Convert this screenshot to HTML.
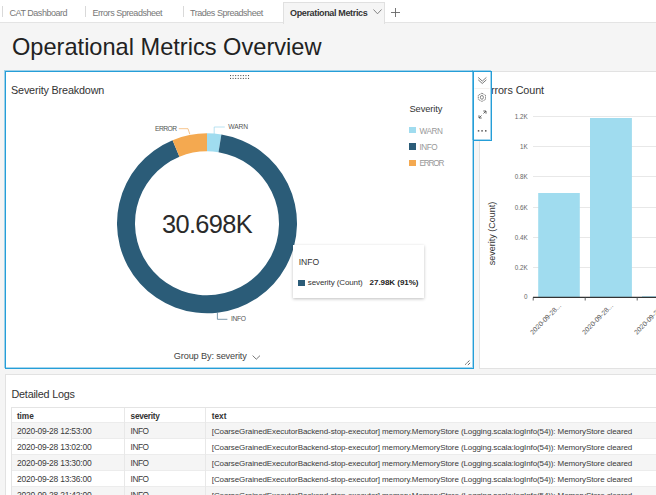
<!DOCTYPE html>
<html><head><meta charset="utf-8">
<style>
*{box-sizing:border-box;margin:0;padding:0}
html,body{width:656px;height:495px;overflow:hidden;background:#f5f5f5;font-family:"Liberation Sans",sans-serif;color:#333}
.a{position:absolute;white-space:nowrap;line-height:1}
.p{position:absolute;background:#fff}
svg.full{position:absolute;left:0;top:0}
</style></head><body>
<div class="p" style="left:0;top:0;width:656px;height:23px;border-bottom:1px solid #e4e4e4"></div>
<div class="p" style="left:2px;top:6px;width:1px;height:11px;background:#d9d9d9"></div>
<div class="p" style="left:85px;top:6px;width:1px;height:11px;background:#d9d9d9"></div>
<div class="p" style="left:183px;top:6px;width:1px;height:11px;background:#d9d9d9"></div>
<div class="a" style="left:9.5px;top:8.85px;font-size:9px;color:#777;letter-spacing:-0.47px;">CAT Dashboard</div>
<div class="a" style="left:92.5px;top:8.85px;font-size:9px;color:#777;letter-spacing:-0.47px;">Errors Spreadsheet</div>
<div class="a" style="left:190px;top:8.85px;font-size:9px;color:#777;letter-spacing:-0.47px;">Trades Spreadsheet</div>
<div class="p" style="left:283px;top:2px;width:102px;height:22px;background:#f5f5f5;border:1px solid #e0e0e0;border-bottom:none"></div>
<div class="a" style="left:290px;top:8.85px;font-size:9px;color:#333;letter-spacing:-0.35px;font-weight:bold;">Operational Metrics</div>
<svg class="a" style="left:373px;top:8.8px" width="9" height="6" viewBox="0 0 9 6"><path d="M0.5 0.5 L4.5 4.8 L8.5 0.5" fill="none" stroke="#777" stroke-width="0.9"/></svg>
<svg class="a" style="left:391.2px;top:7.5px" width="9" height="9" viewBox="0 0 9 9"><path d="M4.5 0 V9 M0 4.5 H9" fill="none" stroke="#666" stroke-width="0.9"/></svg>
<div class="a" style="left:12px;top:36.14px;font-size:23.6px;color:#222;letter-spacing:0px;">Operational Metrics Overview</div>
<div class="p" style="left:479px;top:71px;width:190px;height:298px;border:1px solid #e2e2e2"></div>
<div class="p" style="left:5px;top:374px;width:660px;height:130px;border:1px solid #e2e2e2"></div>
<div class="a" style="left:11.5px;top:388.62px;font-size:10.8px;color:#333;letter-spacing:-0.22px;">Detailed Logs</div>
<div class="p" style="left:11px;top:407px;width:660px;height:100px;border:1px solid #e4e4e4"></div>
<div class="p" style="left:12px;top:422.20px;width:660px;height:16.05px;background:#f5f5f5;border-top:1px solid #ececec"></div>
<div class="p" style="left:12px;top:438.25px;width:660px;height:16.05px;background:#fff;border-top:1px solid #ececec"></div>
<div class="p" style="left:12px;top:454.30px;width:660px;height:16.05px;background:#f5f5f5;border-top:1px solid #ececec"></div>
<div class="p" style="left:12px;top:470.35px;width:660px;height:16.05px;background:#fff;border-top:1px solid #ececec"></div>
<div class="p" style="left:12px;top:486.40px;width:660px;height:16.05px;background:#f5f5f5;border-top:1px solid #ececec"></div>
<div class="p" style="left:124px;top:408px;width:1px;height:90px;background:#e8e8e8"></div>
<div class="p" style="left:205px;top:408px;width:1px;height:90px;background:#e8e8e8"></div>
<div class="a" style="left:16.9px;top:412.14px;font-size:8.3px;color:#333;letter-spacing:-0.05px;font-weight:bold;">time</div>
<div class="a" style="left:130.6px;top:412.14px;font-size:8.3px;color:#333;letter-spacing:-0.3px;font-weight:bold;">severity</div>
<div class="a" style="left:211.8px;top:412.14px;font-size:8.3px;color:#333;letter-spacing:-0.05px;font-weight:bold;">text</div>
<div class="a" style="left:16.9px;top:426.97px;font-size:8.5px;color:#3a3a3a;letter-spacing:-0.23px;">2020-09-28 12:53:00</div>
<div class="a" style="left:130.6px;top:427.14px;font-size:8.3px;color:#3a3a3a;letter-spacing:-0.5px;">INFO</div>
<div class="a" style="left:211.8px;top:427.80px;font-size:8px;color:#3a3a3a;letter-spacing:-0.1px;">[CoarseGrainedExecutorBackend-stop-executor] memory.MemoryStore (Logging.scala:logInfo(54)): MemoryStore cleared</div>
<div class="a" style="left:16.9px;top:443.02px;font-size:8.5px;color:#3a3a3a;letter-spacing:-0.23px;">2020-09-28 13:02:00</div>
<div class="a" style="left:130.6px;top:443.19px;font-size:8.3px;color:#3a3a3a;letter-spacing:-0.5px;">INFO</div>
<div class="a" style="left:211.8px;top:443.85px;font-size:8px;color:#3a3a3a;letter-spacing:-0.1px;">[CoarseGrainedExecutorBackend-stop-executor] memory.MemoryStore (Logging.scala:logInfo(54)): MemoryStore cleared</div>
<div class="a" style="left:16.9px;top:459.07px;font-size:8.5px;color:#3a3a3a;letter-spacing:-0.23px;">2020-09-28 13:30:00</div>
<div class="a" style="left:130.6px;top:459.25px;font-size:8.3px;color:#3a3a3a;letter-spacing:-0.5px;">INFO</div>
<div class="a" style="left:211.8px;top:459.90px;font-size:8px;color:#3a3a3a;letter-spacing:-0.1px;">[CoarseGrainedExecutorBackend-stop-executor] memory.MemoryStore (Logging.scala:logInfo(54)): MemoryStore cleared</div>
<div class="a" style="left:16.9px;top:475.12px;font-size:8.5px;color:#3a3a3a;letter-spacing:-0.23px;">2020-09-28 13:36:00</div>
<div class="a" style="left:130.6px;top:475.30px;font-size:8.3px;color:#3a3a3a;letter-spacing:-0.5px;">INFO</div>
<div class="a" style="left:211.8px;top:475.95px;font-size:8px;color:#3a3a3a;letter-spacing:-0.1px;">[CoarseGrainedExecutorBackend-stop-executor] memory.MemoryStore (Logging.scala:logInfo(54)): MemoryStore cleared</div>
<div class="a" style="left:16.9px;top:491.17px;font-size:8.5px;color:#3a3a3a;letter-spacing:-0.23px;">2020-09-28 21:42:00</div>
<div class="a" style="left:130.6px;top:491.34px;font-size:8.3px;color:#3a3a3a;letter-spacing:-0.5px;">INFO</div>
<div class="a" style="left:211.8px;top:492.00px;font-size:8px;color:#3a3a3a;letter-spacing:-0.1px;">[CoarseGrainedExecutorBackend-stop-executor] memory.MemoryStore (Logging.scala:logInfo(54)): MemoryStore cleared</div>
<div class="p" style="left:5px;top:71px;width:469px;height:298px;border:1px solid #259ed8;box-shadow:-1px -1px 0 0 rgba(30,155,215,0.4),inset -1px -1px 0 0 rgba(30,155,215,0.4)"></div>
<svg class="full" width="656" height="495" viewBox="0 0 656 495">
  <path d="M207.00 133.30 A90 90 0 0 1 221.39 134.46 L218.51 152.23 A72 72 0 0 0 207.00 151.30Z" fill="#a0dcef"/>
  <path d="M221.39 134.46 A90 90 0 1 1 172.56 140.15 L179.45 156.78 A72 72 0 1 0 218.51 152.23Z" fill="#2b5c78"/>
  <path d="M172.56 140.15 A90 90 0 0 1 207.00 133.30 L207.00 151.30 A72 72 0 0 0 179.45 156.78Z" fill="#f4a950"/>
  <path d="M189.8 134.2 L188 128.7 L178.8 128.7" fill="none" stroke="#f4b570" stroke-width="0.8"/>
  <path d="M214.2 134 L214.2 127 L224.8 127" fill="none" stroke="#a8dcef" stroke-width="0.8"/>
  <path d="M217.4 312.6 L217.4 319.3 L227.4 319.3" fill="none" stroke="#5a7f95" stroke-width="0.8"/>
  <g fill="#555"><rect x="230.00" y="75" width="1.05" height="1.1"/><rect x="232.57" y="75" width="1.05" height="1.1"/><rect x="235.14" y="75" width="1.05" height="1.1"/><rect x="237.71" y="75" width="1.05" height="1.1"/><rect x="240.28" y="75" width="1.05" height="1.1"/><rect x="242.85" y="75" width="1.05" height="1.1"/><rect x="245.42" y="75" width="1.05" height="1.1"/><rect x="247.99" y="75" width="1.05" height="1.1"/><rect x="230.00" y="77.9" width="1.05" height="1.1"/><rect x="232.57" y="77.9" width="1.05" height="1.1"/><rect x="235.14" y="77.9" width="1.05" height="1.1"/><rect x="237.71" y="77.9" width="1.05" height="1.1"/><rect x="240.28" y="77.9" width="1.05" height="1.1"/><rect x="242.85" y="77.9" width="1.05" height="1.1"/><rect x="245.42" y="77.9" width="1.05" height="1.1"/><rect x="247.99" y="77.9" width="1.05" height="1.1"/></g>
  <path d="M465.3 364.5 L469.6 360.4 M467.9 365 L470.1 362.9" stroke="#444" stroke-width="1" stroke-dasharray="1.3 0.5"/>
  <path d="M252.6 355.6 L256.3 359.2 L260 355.6" fill="none" stroke="#555" stroke-width="0.8"/>
</svg>
<div class="a" style="left:11px;top:84.82px;font-size:10.8px;color:#333;letter-spacing:-0.16px;">Severity Breakdown</div>
<div class="a" style="left:155px;top:126.31px;font-size:6.7px;color:#555;letter-spacing:-0.5px;">ERROR</div>
<div class="a" style="left:228.2px;top:124.31px;font-size:6.7px;color:#555;letter-spacing:-0.1px;">WARN</div>
<div class="a" style="left:231px;top:316.31px;font-size:6.7px;color:#555;letter-spacing:-0.35px;">INFO</div>
<div class="a" style="left:162px;top:212.01px;font-size:25.4px;color:#2a2a2a;letter-spacing:-0.65px;">30.698K</div>
<div class="a" style="left:409.5px;top:104.59px;font-size:9.3px;color:#333;letter-spacing:-0.1px;">Severity</div>
<div class="p" style="left:409.3px;top:127.10px;width:6.6px;height:6.4px;background:#a0dcef"></div>
<div class="a" style="left:419.6px;top:127.63px;font-size:8.2px;color:#999;letter-spacing:-0.45px;">WARN</div>
<div class="p" style="left:409.3px;top:143.45px;width:6.6px;height:6.4px;background:#2b5c78"></div>
<div class="a" style="left:419.6px;top:143.98px;font-size:8.2px;color:#999;letter-spacing:-0.5px;">INFO</div>
<div class="p" style="left:409.3px;top:159.80px;width:6.6px;height:6.4px;background:#f4a950"></div>
<div class="a" style="left:419.6px;top:160.33px;font-size:8.2px;color:#999;letter-spacing:-1.2px;">ERROR</div>
<div class="a" style="left:173.8px;top:352.18px;font-size:9.2px;color:#444;letter-spacing:-0.15px;">Group By: severity</div>
<div class="p" style="left:293px;top:245px;width:131px;height:53px;box-shadow:0 1px 3px rgba(0,0,0,0.25)"></div>
<div class="a" style="left:298.7px;top:258.09px;font-size:8.6px;color:#333;letter-spacing:0px;">INFO</div>
<div class="p" style="left:298.2px;top:279.6px;width:6.7px;height:6.3px;background:#2b5c78"></div>
<div class="a" style="left:307.8px;top:278.50px;font-size:8px;color:#333;letter-spacing:-0.1px;">severity (Count)</div>
<div class="a" style="left:369.6px;top:278.50px;font-size:8px;color:#222;letter-spacing:-0.05px;font-weight:bold;">27.98K (91%)</div>
<svg class="full" width="656" height="495" viewBox="0 0 656 495">
  <g stroke="#e8e8e8" stroke-width="1"><line x1="533" y1="116.5" x2="656" y2="116.5"/><line x1="533" y1="146.5" x2="656" y2="146.5"/><line x1="533" y1="176.5" x2="656" y2="176.5"/><line x1="533" y1="207.5" x2="656" y2="207.5"/><line x1="533" y1="237.5" x2="656" y2="237.5"/><line x1="533" y1="267.5" x2="656" y2="267.5"/></g>
  <rect x="538.2" y="193" width="41.6" height="104.3" fill="#a0dcef"/>
  <rect x="590" y="118" width="41.9" height="179.3" fill="#a0dcef"/>
  <rect x="642" y="296.1" width="41.9" height="0.8" fill="#a0dcef"/>
  <line x1="533" y1="297.3" x2="656" y2="297.3" stroke="#333" stroke-width="1.3"/>
  <g stroke="#555" stroke-width="0.9">
    <line x1="533.2" y1="297.5" x2="533.2" y2="300.5"/>
    <line x1="585.2" y1="297.5" x2="585.2" y2="300.5"/>
    <line x1="637.2" y1="297.5" x2="637.2" y2="300.5"/>
  </g>
  <g font-family="Liberation Sans" font-size="6.3" fill="#666" text-anchor="end"><text x="527.6" y="118.6">1.2K</text><text x="527.6" y="148.6">1K</text><text x="527.6" y="178.6">0.8K</text><text x="527.6" y="209.6">0.6K</text><text x="527.6" y="239.6">0.4K</text><text x="527.6" y="269.6">0.2K</text><text x="527.6" y="299.0">0</text></g>
  <g font-family="Liberation Sans" font-size="6.8" fill="#555" text-anchor="end"><text transform="translate(561.5,306.3) rotate(-45)">2020-09-28...</text><text transform="translate(613.5,306.3) rotate(-45)">2020-09-28...</text><text transform="translate(665.5,306.3) rotate(-45)">2020-09-28...</text></g>
  <text transform="translate(495.2,233.4) rotate(-90)" font-family="Liberation Sans" font-size="9" fill="#333" text-anchor="middle">severity (Count)</text>
</svg>
<div class="a" style="left:483.8px;top:84.82px;font-size:10.8px;color:#333;letter-spacing:-0.08px;">Errors Count</div>
<div class="p" style="left:473px;top:71px;width:19px;height:70px;border:1px solid #259ed8;box-shadow:-1px -1px 0 0 rgba(30,155,215,0.4),inset -1px -1px 0 0 rgba(30,155,215,0.4)"></div>
<svg class="full" width="656" height="495" viewBox="0 0 656 495">
  <path d="M478.2 77.4 L482.3 81.1 L486.4 77.4 M478.2 79.8 L482.3 83.5 L486.4 79.8" fill="none" stroke="#666" stroke-width="0.85"/>
  <line x1="474.5" y1="88.5" x2="489.5" y2="88.5" stroke="#f0ecea" stroke-width="0.8"/>
  <path d="M481.9 93.2 L485.5 95.3 L485.5 99.4 L481.9 101.5 L478.3 99.4 L478.3 95.3 Z" fill="none" stroke="#666" stroke-width="0.8" stroke-dasharray="1.3 0.5"/>
  <ellipse cx="481.9" cy="97.35" rx="1.5" ry="1.9" fill="none" stroke="#666" stroke-width="0.8"/>
  <path d="M486 111 L483.5 113.5 M483.3 111 L486 111 L486 113.7 M479 118 L481.5 115.5 M479 115.3 L479 118 L481.7 118" fill="none" stroke="#555" stroke-width="0.9"/>
  <rect x="477.8" y="130.1" width="1.5" height="1.5" fill="#555"/>
  <rect x="481.3" y="130.1" width="1.5" height="1.5" fill="#555"/>
  <rect x="485" y="130.1" width="1.5" height="1.5" fill="#555"/>
</svg>
</body></html>
